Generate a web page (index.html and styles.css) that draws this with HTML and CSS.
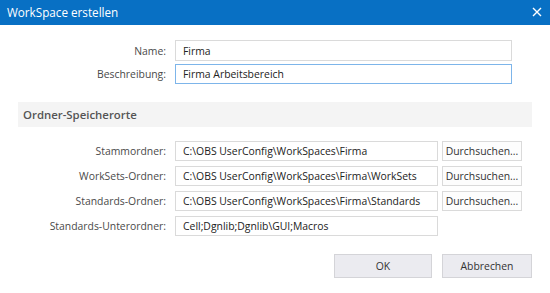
FILE: index.html
```html
<!DOCTYPE html>
<html lang="de">
<head>
    <meta charset="UTF-8">
    <meta name="viewport" content="width=device-width, initial-scale=1.0">
    <title>WorkSpace erstellen</title>
    <link rel="stylesheet" href="styles.css">
</head>
<body>
    <div class="dialog">
        <div class="titlebar">
            <span class="title">WorkSpace erstellen</span>
            <svg class="close" width="10" height="10" viewBox="0 0 10 10">
                <path d="M1 1 L9 9 M9 1 L1 9" stroke="#fff" stroke-width="1.4" fill="none"/>
            </svg>
        </div>

        <div class="form top-form">
            <label class="label">Name:</label>
            <input class="field wide" type="text" value="Firma">
            <label class="label">Beschreibung:</label>
            <input class="field wide focused" type="text" value="Firma Arbeitsbereich">
        </div>

        <div class="section-header">Ordner-Speicherorte</div>

        <div class="form folder-form">
            <label class="label">Stammordner:</label>
            <input class="field" type="text" value="C:\OBS UserConfig\WorkSpaces\Firma">
            <button class="browse">Durchsuchen...</button>

            <label class="label">WorkSets-Ordner:</label>
            <input class="field" type="text" value="C:\OBS UserConfig\WorkSpaces\Firma\WorkSets">
            <button class="browse">Durchsuchen...</button>

            <label class="label">Standards-Ordner:</label>
            <input class="field" type="text" value="C:\OBS UserConfig\WorkSpaces\Firma\Standards">
            <button class="browse">Durchsuchen...</button>

            <label class="label">Standards-Unterordner:</label>
            <input class="field" type="text" value="Cell;Dgnlib;Dgnlib\GUI;Macros">
        </div>

        <div class="footer">
            <button class="action ok">OK</button>
            <button class="action cancel">Abbrechen</button>
        </div>
    </div>
</body>
</html>
```

FILE: styles.css
```css
body {
    font-family: "Open Sans", "Noto Sans", Arial, sans-serif;
    font-size: 10.4px;
    background-color: #fff;
    margin: 0;
    padding: 0;
}

.dialog {
    width: 550px;
    height: 293px;
    background-color: #fff;
}

.titlebar {
    height: 25px;
    background-color: #0870c4;
    display: flex;
    align-items: center;
    justify-content: space-between;
    padding: 0 8px 0 7px;
    box-sizing: border-box;
}

.title {
    color: #fff;
    font-size: 11.7px;
    margin-top: -1px;
}

.close {
    margin-top: -2px;
}

.form {
    display: grid;
    grid-template-columns: 166px 263px 80px;
    column-gap: 9px;
    align-items: center;
}

.top-form {
    grid-template-columns: 166px 337px;
    row-gap: 3px;
    padding-top: 15px;
}

.folder-form {
    row-gap: 5px;
    margin-top: 14px;
}

.folder-form .browse {
    margin-left: -5px;
}

.label {
    text-align: right;
    color: #4a4a4a;
}

.field {
    height: 21px;
    box-sizing: border-box;
    border: 1px solid #dadada;
    padding: 0 7px;
    font-family: inherit;
    font-size: 10.4px;
    color: #222;
    outline: none;
    margin: 0;
}

.folder-form .field {
    height: 20px;
}

.field.focused {
    border-color: #7db5ea;
    height: 20px;
}

.section-header {
    margin: 18px 18px 0 18px;
    height: 25px;
    line-height: 25px;
    background-color: #f4f4f4;
    color: #555;
    font-weight: 600;
    font-size: 11.4px;
    padding-left: 5px;
}

.browse {
    height: 20px;
    width: 80px;
    box-sizing: border-box;
    border: 1px solid #dadada;
    background-color: #fdfdfd;
    font-family: inherit;
    font-size: 10.4px;
    color: #333;
    padding: 0;
}

.footer {
    display: flex;
    justify-content: flex-end;
    gap: 10px;
    padding-right: 18px;
    margin-top: 18px;
}

.action {
    height: 24px;
    box-sizing: border-box;
    border: 1px solid #d4d4d8;
    background-color: #ebebf0;
    font-family: inherit;
    font-size: 10.4px;
    color: #333;
}

.ok {
    width: 98px;
}

.cancel {
    width: 90px;
}
```
